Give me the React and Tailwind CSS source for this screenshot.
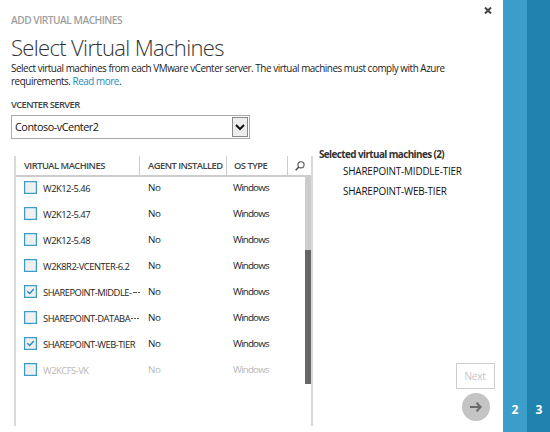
const machines = [
  { name: 'W2K12-5.46' },
  { name: 'W2K12-5.47' },
  { name: 'W2K12-5.48' },
  { name: 'W2K8R2-VCENTER-6.2' },
  { name: 'SHAREPOINT-MIDDLE-', checked: true, cut: true },
  { name: 'SHAREPOINT-DATABA', cut: true },
  { name: 'SHAREPOINT-WEB-TIER', checked: true },
  { name: 'W2KCFS-VK', disabled: true },
];

function Checkbox({ checked }) {
  return (
    <svg className="mb-px shrink-0" width="13" height="13" viewBox="0 0 13 13" fill="none">
      <rect x=".65" y=".65" width="11.7" height="11.7" fill="#fff" stroke="#3c9bcc" strokeWidth="1.3" />
      <rect x="2" y="2" width="9" height="9" fill="#f0f0f0" />
      {checked && <path d="M3.3 6.2 5.7 8.5 9.8 4" stroke="#2489be" strokeWidth="1.3" />}
    </svg>
  );
}

function MachineRow({ machine }) {
  return (
    <div className={`flex h-[26px] items-center text-[9.4px] whitespace-nowrap ${machine.disabled ? 'text-[#b8b8b8]' : 'text-[#222]'}`}>
      <div className="flex w-[124px] shrink-0 items-center pl-2">
        <Checkbox checked={machine.checked} />
        <span className="mt-[2px] ml-[6px] tracking-[-0.5px]">{machine.name}</span>
        {machine.cut && (
          <span className="mt-[2px] flex h-[14px] w-[9px] items-center justify-between pl-px">
            <i className="h-px w-[2px] bg-[#555]" />
            <i className="h-px w-[2px] bg-[#555]" />
            <i className="h-px w-[2px] bg-[#555]" />
          </span>
        )}
      </div>
      <span className="w-[86px] pt-px pl-2 text-[9.8px] tracking-[-0.3px]">No</span>
      <span className="pt-px pl-[7px] text-[9.8px] tracking-[-0.85px]">Windows</span>
    </div>
  );
}

export default function App() {
  return (
    <div className="flex h-[432px] w-[550px] overflow-hidden bg-white font-['Open_Sans','Noto_Sans',sans-serif] text-[#333]">
      <main className="flex w-[503px] flex-col">
        <div className="flex h-[34px] justify-between pl-[11px]">
          <span className="pt-[13px] text-[10.2px] leading-[14px] font-semibold tracking-[-0.5px] whitespace-nowrap text-[#a0a0a0]">ADD VIRTUAL MACHINES</span>
          <svg className="mt-[7px] mr-[11px]" width="8" height="7" viewBox="0 0 8 7" stroke="#444" strokeWidth="2">
            <path d="M1 .5 7 6.5M7 .5 1 6.5" />
          </svg>
        </div>
        <h1 className="h-[28px] pl-[11px] text-[22px] leading-[26px] font-light tracking-[-0.66px] whitespace-nowrap text-[#333]">Select Virtual Machines</h1>
        <p className="h-[36px] pl-[11px] text-[9.9px] leading-[13px] tracking-[-0.45px] whitespace-nowrap text-[#222]">
          Select virtual machines from each VMware vCenter server. The virtual machines must comply with Azure
          <br />
          requirements. <a className="text-[#2489be]">Read more</a>.
        </p>
        <label className="h-[17px] pl-[11px] text-[9.4px] leading-[14px] font-semibold tracking-[-0.58px] whitespace-nowrap text-[#444]">VCENTER SERVER</label>
        <div className="ml-[11px] flex h-[24px] w-[239px] shrink-0 items-center justify-between border border-[#aaa] pr-px pl-[3px] text-[10.8px] tracking-[-0.45px] text-[#111]">
          <span className="pt-px">Contoso-vCenter2</span>
          <span className="flex h-[20px] w-[16px] items-center justify-center border border-[#888] bg-[#eee]">
            <svg width="10" height="7" viewBox="0 0 10 7" fill="none" stroke="#111" strokeWidth="2">
              <path d="M1 1 5 5 9 1" />
            </svg>
          </span>
        </div>
        <div className="flex grow">
          <section className="mt-[17px] ml-[14px] h-[270px] w-[299px] shrink-0 border-x-2 border-[#d9d9d9]">
            <div className="flex h-[21px] border-b-2 border-[#ccc] text-[9.4px] leading-[19px] font-semibold tracking-[-0.52px] whitespace-nowrap text-[#444]">
              <span className="w-[124px] border-r border-[#ccc] pl-2">VIRTUAL MACHINES</span>
              <span className="w-[87px] border-r border-[#ccc] pl-2">AGENT INSTALLED</span>
              <span className="w-[61px] border-r border-[#ccc] pl-[7px]">OS TYPE</span>
              <span className="flex grow items-center justify-center">
                <svg width="10" height="10" viewBox="0 0 10 10" fill="none" stroke="#555">
                  <circle cx="6" cy="3.8" r="3.1" strokeWidth="1.1" />
                  <path d="M3.8 6 .7 9.3" strokeWidth="1.6" />
                </svg>
              </span>
            </div>
            <div className="flex justify-between">
              <div className="-mt-[2px]">
                {machines.map((machine) => (
                  <MachineRow key={machine.name} machine={machine} />
                ))}
              </div>
              <div className="h-[207px] w-[6px] bg-[#ccc] pt-[73px]">
                <div className="h-[134px] bg-[#666]" />
              </div>
            </div>
          </section>
          <aside className="flex grow flex-col pt-[8px] pl-[6px] text-[9.9px] whitespace-nowrap">
            <h2 className="leading-[15px] font-bold tracking-[-0.58px]">Selected virtual machines (2)</h2>
            <ul className="pl-[24px] tracking-[-0.17px] text-[#111]">
              <li className="h-[20px] leading-[18px]">SHAREPOINT-MIDDLE-TIER</li>
              <li className="h-[20px] leading-[18px]">SHAREPOINT-WEB-TIER</li>
            </ul>
            <div className="mt-[161px] mr-[8px] flex w-[40px] flex-col items-center gap-[4px] self-end">
              <button className="h-[26px] w-[39px] border border-[#ccc] text-[10px] tracking-[-0.2px] text-[#c4c4c4]">Next</button>
              <button className="ml-px flex h-[28px] w-[28px] items-center justify-center rounded-full bg-[#c4c4c4]">
                <svg width="12" height="10" viewBox="0 0 12 10" fill="none" stroke="#6a6a6a" strokeWidth="2">
                  <path d="M0 5H10.5M6.5.8 10.7 5 6.5 9.2" />
                </svg>
              </button>
            </div>
          </aside>
        </div>
      </main>
      <nav className="flex text-center text-[12px] leading-[16px] font-bold text-white">
        <div className="flex w-[24px] flex-col justify-end bg-[#3a9dca] pb-[14px]">2</div>
        <div className="flex w-[23px] flex-col justify-end bg-[#1f82af] pb-[14px] pl-px">3</div>
      </nav>
    </div>
  );
}
